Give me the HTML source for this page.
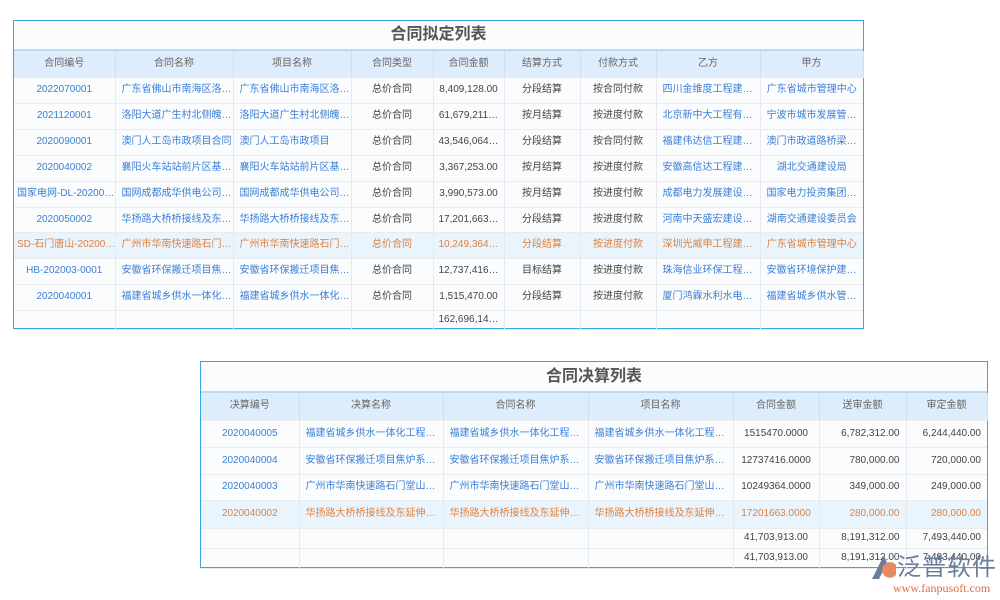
<!DOCTYPE html>
<html><head><meta charset="utf-8"><style>
*{margin:0;padding:0;box-sizing:border-box}
body{width:1000px;height:600px;background:#fff;position:relative;overflow:hidden;font-family:"Liberation Sans","Noto Sans CJK SC",sans-serif;font-size:10px;color:#444}
.box{position:absolute;border:1px solid #3aa6de;background:#fbfcfd}
.title{position:absolute;left:0;right:0;top:0;text-align:center;font-weight:bold;color:#555;font-size:16px;border-bottom:2px solid #b9dcf3}
table{position:absolute;left:0;border-collapse:collapse;table-layout:fixed}
td{border-right:1px solid #e6eaee;border-bottom:1px solid #e8ecef;text-align:center;white-space:nowrap;overflow:hidden;padding:0 3px;vertical-align:middle;line-height:14px}
td span{display:inline-block;vertical-align:middle;line-height:14px}
td:last-child{border-right:none}
tr.h td{background:#deedfb;color:#666;border-right:1px solid #cfe0ef}
.b{color:#3b7fd6}
tr.o td{background:#e9f4fd;color:#e0823e}
tr.o td.b{color:#e0823e}
.r{text-align:right;padding-right:6px}
.l{text-align:left;padding-left:6px}
</style></head><body>

<div class="box" style="left:13px;top:20px;width:851px;height:309px">
<div class="title" style="height:30px;line-height:28px">合同拟定列表</div>
<table style="top:30px;width:849px">
<colgroup><col style="width:101px"><col style="width:118px"><col style="width:118px"><col style="width:82px"><col style="width:71px"><col style="width:76px"><col style="width:76px"><col style="width:104px"><col style="width:103px"></colgroup>
<tr class="h" style="height:26px"><td>合同编号</td><td>合同名称</td><td>项目名称</td><td>合同类型</td><td>合同金额</td><td>结算方式</td><td>付款方式</td><td>乙方</td><td>甲方</td></tr>
<tr style="height:26px"><td class="b">2022070001</td><td class="b l">广东省佛山市南海区洛…</td><td class="b l">广东省佛山市南海区洛…</td><td>总价合同</td><td>8,409,128.00</td><td>分段结算</td><td>按合同付款</td><td class="b l">四川金维度工程建…</td><td class="b">广东省城市管理中心</td></tr>
<tr style="height:26px"><td class="b">2021120001</td><td class="b l">洛阳大道广生村北侧魄…</td><td class="b l">洛阳大道广生村北侧魄…</td><td>总价合同</td><td>61,679,211…</td><td>按月结算</td><td>按进度付款</td><td class="b l">北京新中大工程有…</td><td class="b l">宁波市城市发展管…</td></tr>
<tr style="height:26px"><td class="b">2020090001</td><td class="b l">澳门人工岛市政项目合同</td><td class="b l">澳门人工岛市政项目</td><td>总价合同</td><td>43,546,064…</td><td>分段结算</td><td>按合同付款</td><td class="b l">福建伟达信工程建…</td><td class="b l">澳门市政道路桥梁…</td></tr>
<tr style="height:26px"><td class="b">2020040002</td><td class="b l">襄阳火车站站前片区基…</td><td class="b l">襄阳火车站站前片区基…</td><td>总价合同</td><td>3,367,253.00</td><td>按月结算</td><td>按进度付款</td><td class="b l">安徽高信达工程建…</td><td class="b">湖北交通建设局</td></tr>
<tr style="height:26px"><td class="b">国家电网-DL-20200…</td><td class="b l">国网成都成华供电公司…</td><td class="b l">国网成都成华供电公司…</td><td>总价合同</td><td>3,990,573.00</td><td>按月结算</td><td>按进度付款</td><td class="b l">成都电力发展建设…</td><td class="b l">国家电力投资集团…</td></tr>
<tr style="height:25px"><td class="b">2020050002</td><td class="b l">华扬路大桥桥接线及东…</td><td class="b l">华扬路大桥桥接线及东…</td><td>总价合同</td><td>17,201,663…</td><td>分段结算</td><td>按进度付款</td><td class="b l">河南中天盛宏建设…</td><td class="b">湖南交通建设委员会</td></tr>
<tr class="o" style="height:26px"><td class="b">SD-石门唐山-20200…</td><td class="b l">广州市华南快速路石门…</td><td class="b l">广州市华南快速路石门…</td><td>总价合同</td><td>10,249,364…</td><td>分段结算</td><td>按进度付款</td><td class="b l">深圳光威申工程建…</td><td class="b">广东省城市管理中心</td></tr>
<tr style="height:26px"><td class="b">HB-202003-0001</td><td class="b l">安徽省环保搬迁项目焦…</td><td class="b l">安徽省环保搬迁项目焦…</td><td>总价合同</td><td>12,737,416…</td><td>目标结算</td><td>按进度付款</td><td class="b l">珠海信业环保工程…</td><td class="b l">安徽省环境保护建…</td></tr>
<tr style="height:26px"><td class="b">2020040001</td><td class="b l">福建省城乡供水一体化…</td><td class="b l">福建省城乡供水一体化…</td><td>总价合同</td><td>1,515,470.00</td><td>分段结算</td><td>按进度付款</td><td class="b l">厦门鸿霖水利水电…</td><td class="b l">福建省城乡供水管…</td></tr>
<tr style="height:19px"><td></td><td></td><td></td><td></td><td>162,696,14…</td><td></td><td></td><td></td><td></td></tr>
</table></div>

<div class="box" style="left:200px;top:361px;width:788px;height:207px">
<div class="title" style="height:31px;line-height:29px">合同决算列表</div>
<table style="top:31px;width:786px">
<colgroup><col style="width:98px"><col style="width:144px"><col style="width:145px"><col style="width:145px"><col style="width:86px"><col style="width:87px"><col style="width:81px"></colgroup>
<tr class="h" style="height:27px"><td>决算编号</td><td>决算名称</td><td>合同名称</td><td>项目名称</td><td>合同金额</td><td>送审金额</td><td>审定金额</td></tr>
<tr style="height:27px"><td class="b">2020040005</td><td class="b l">福建省城乡供水一体化工程…</td><td class="b l">福建省城乡供水一体化工程…</td><td class="b l">福建省城乡供水一体化工程…</td><td>1515470.0000</td><td class="r">6,782,312.00</td><td class="r">6,244,440.00</td></tr>
<tr style="height:27px"><td class="b">2020040004</td><td class="b l">安徽省环保搬迁项目焦炉系…</td><td class="b l">安徽省环保搬迁项目焦炉系…</td><td class="b l">安徽省环保搬迁项目焦炉系…</td><td>12737416.0000</td><td class="r">780,000.00</td><td class="r">720,000.00</td></tr>
<tr style="height:26px"><td class="b">2020040003</td><td class="b l">广州市华南快速路石门堂山…</td><td class="b l">广州市华南快速路石门堂山…</td><td class="b l">广州市华南快速路石门堂山…</td><td>10249364.0000</td><td class="r">349,000.00</td><td class="r">249,000.00</td></tr>
<tr class="o" style="height:28px"><td class="b">2020040002</td><td class="b l">华扬路大桥桥接线及东延伸…</td><td class="b l">华扬路大桥桥接线及东延伸…</td><td class="b l">华扬路大桥桥接线及东延伸…</td><td>17201663.0000</td><td class="r">280,000.00</td><td class="r">280,000.00</td></tr>
<tr style="height:20px"><td></td><td></td><td></td><td></td><td>41,703,913.00</td><td class="r">8,191,312.00</td><td class="r">7,493,440.00</td></tr>
<tr style="height:20px"><td></td><td></td><td></td><td></td><td>41,703,913.00</td><td class="r">8,191,312.00</td><td class="r">7,493,440.00</td></tr>
</table></div>

<svg style="position:absolute;left:870px;top:553px" width="28" height="28" viewBox="0 0 28 28">
<path d="M14 2 L2 26 L9 26 L17 10 Z" fill="#6b7d99"/>
<path d="M12 16 A8 8 0 0 1 26 12 L26 22 A8 8 0 0 1 12 16Z" fill="#e58a62"/>
</svg>
<div style="position:absolute;left:897px;top:550px;font-size:24px;line-height:30px;color:#6b7d99;font-family:'Noto Sans CJK SC',sans-serif;letter-spacing:1px">泛普软件</div>
<div style="position:absolute;left:893px;top:582px;font-size:12px;line-height:13px;color:#d9704a;font-family:'Liberation Serif',serif">www.fanpusoft.com</div>
</body></html>
